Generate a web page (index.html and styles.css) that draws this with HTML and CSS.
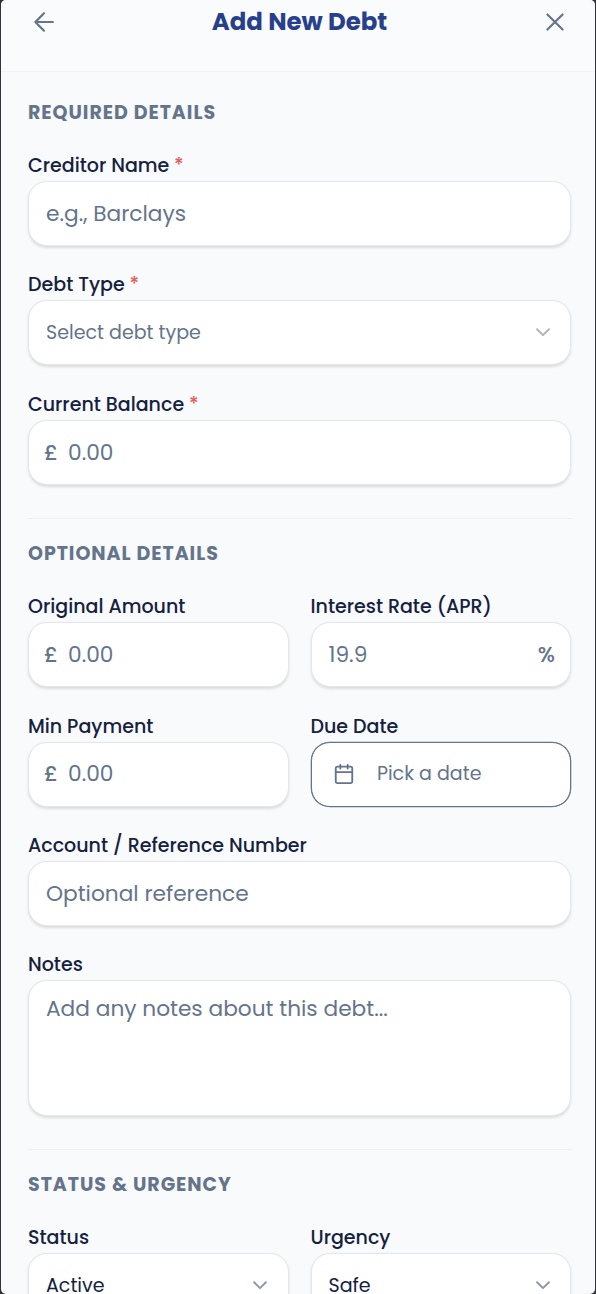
FILE: index.html
```html
<!DOCTYPE html>
<html lang="en">
<head>
<meta charset="utf-8">
<title>Add New Debt</title>
<link rel="stylesheet" href="styles.css">
</head>
<body>
<main class="sheet">
  <header class="header">
    <svg class="icon" width="26" height="26" viewBox="0 0 24 24"><path d="M20.200 12H4M12 4L4 12l8 8"/></svg>
    <h1 class="title">Add New Debt</h1>
    <svg class="icon" width="26" height="26" viewBox="0 0 24 24"><path d="M19 5L5 19M5 5l14 14"/></svg>
  </header>
  <div class="body">
    <section class="section">
      <h2 class="heading">REQUIRED DETAILS</h2>
      <div class="fields">
        <div class="field">
          <div class="label">Creditor Name<span class="star">*</span></div>
          <div class="input">e.g., Barclays</div>
        </div>
        <div class="field">
          <div class="label">Debt Type<span class="star">*</span></div>
          <div class="input select placeholder">Select debt type<svg class="chevron" width="22" height="22" viewBox="0 0 24 24"><path d="M5.500 9l6.500 6.500L18.500 9"/></svg></div>
        </div>
        <div class="field">
          <div class="label">Current Balance<span class="star">*</span></div>
          <div class="input money wide"><span class="unit">£</span><span>0.00</span></div>
        </div>
      </div>
    </section>
    <section class="section divided">
      <h2 class="heading">OPTIONAL DETAILS</h2>
      <div class="fields">
        <div class="row">
          <div class="field">
            <div class="label">Original Amount</div>
            <div class="input money"><span class="unit">£</span><span>0.00</span></div>
          </div>
          <div class="field">
            <div class="label">Interest Rate (APR)</div>
            <div class="input percent"><span>19.9</span><span class="unit">%</span></div>
          </div>
        </div>
        <div class="row">
          <div class="field">
            <div class="label">Min Payment</div>
            <div class="input money"><span class="unit">£</span><span>0.00</span></div>
          </div>
          <div class="field">
            <div class="label">Due Date</div>
            <div class="input date"><svg class="calendar" width="22" height="22" viewBox="0 0 24 24"><rect x="3" y="4" width="18" height="18" rx="2"/><path d="M8 2v4M16 2v4M3 10h18"/></svg><span>Pick a date</span></div>
          </div>
        </div>
        <div class="field">
          <div class="label">Account / Reference Number</div>
          <div class="input wide">Optional reference</div>
        </div>
        <div class="field">
          <div class="label">Notes</div>
          <div class="input area">Add any notes about this debt...</div>
        </div>
      </div>
    </section>
    <section class="section divided">
      <h2 class="heading">STATUS &amp; URGENCY</h2>
      <div class="row">
        <div class="field">
          <div class="label">Status</div>
          <div class="input select">Active<svg class="chevron" width="22" height="22" viewBox="0 0 24 24"><path d="M5.500 9l6.500 6.500L18.500 9"/></svg></div>
        </div>
        <div class="field">
          <div class="label">Urgency</div>
          <div class="input select">Safe<svg class="chevron" width="22" height="22" viewBox="0 0 24 24"><path d="M5.500 9l6.500 6.500L18.500 9"/></svg></div>
        </div>
      </div>
    </section>
  </div>
</main>
</body>
</html>
```
FILE: styles.css
```css
* { box-sizing: border-box; }
body {
  margin: 0;
  height: 1294px;
  overflow: hidden;
  background: #32323e;
  font-family: Poppins, Inter, "Noto Sans", sans-serif;
  color: #14213f;
}
.sheet {
  height: 1294px;
  margin: 0 1px;
  overflow: hidden;
  border-radius: 5px;
  background: #f9fafc;
}
.header {
  display: flex;
  justify-content: space-between;
  height: 71.600px;
  padding: 9px 27px 0 30px;
  border-bottom: 1px solid #f1f3f6;
  background: #fafbfd;
}
.icon, .calendar, .chevron {
  flex: none;
  fill: none;
  stroke: #64748b;
  stroke-width: 2;
  stroke-linecap: round;
  stroke-linejoin: round;
}
.title {
  margin: -4px 0 0;
  font-size: 24.450px;
  line-height: 34px;
  font-weight: 700;
  color: #27408b;
}
.body { padding: 27.400px 23px 0 27px; }
.section { display: flex; flex-direction: column; gap: 25px; }
.divided { margin-top: 33px; padding-top: 21.500px; border-top: 1px solid #eef0f3; }
.fields, .section > .row { width: 543px; }
.heading {
  margin: 0;
  font-size: 19px;
  line-height: 28px;
  font-weight: 700;
  letter-spacing: .95px;
  color: #64748b;
}
.fields { display: flex; flex-direction: column; gap: 25.100px; }
.row { display: grid; grid-template-columns: 1fr 1fr; gap: 22px; }
.field { display: flex; flex-direction: column; gap: 1.200px; min-width: 0; }
.label {
  display: flex;
  gap: 4.800px;
  font-size: 19.040px;
  line-height: 28px;
  font-weight: 500;
  white-space: nowrap;
}
.star { color: #e35d59; }
.input {
  display: flex;
  align-items: center;
  height: 65px;
  padding: 0 17px;
  border: 1px solid #e5e7eb;
  border-radius: 19px;
  background: #fff;
  box-shadow: 0 1.400px 2.800px rgba(0, 0, 0, .12);
  font-size: 21.700px;
  line-height: 32px;
  color: #64748b;
  white-space: nowrap;
}
.wide { padding-top: 1.200px; }
.select { justify-content: space-between; font-size: 19.040px; color: #14213f; }
.chevron { opacity: .75; margin: -1px -.600px 0 0; }
.placeholder { color: #64748b; }
.placeholder .chevron { opacity: .55; }
.money { gap: 10px; padding-left: 15px; }
.percent { justify-content: space-between; padding-right: 15px; }
.unit { font-weight: 500; }
.date {
  gap: 21.600px;
  padding-left: 21.800px;
  border-color: #64748b;
  box-shadow: 0 0 0 .300px #64748b;
  font-size: 19.040px;
}
.area { height: 135.300px; align-items: flex-start; padding-top: 11.600px; }
```
